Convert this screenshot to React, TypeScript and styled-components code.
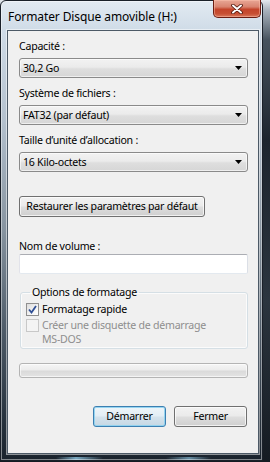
import React from "react";
import styled, { createGlobalStyle } from "styled-components";

const GlobalStyle = createGlobalStyle`
  html, body {
    margin: 0;
    padding: 0;
  }
  body {
    font-family: "Noto Sans", "Open Sans", sans-serif;
    font-size: 10.6px;
    letter-spacing: -0.25px;
    color: #000;
  }
`;

const Desktop = styled.div`
  display: flex;
  width: 270px;
  height: 462px;
  overflow: hidden;
  background: linear-gradient(
    to bottom,
    #e4e9ee 0px,
    #aab4be 10px,
    #46525e 40px,
    #1d252e 140px,
    #2b353f 300px,
    #151b22 100%
  );
`;

const Window = styled.div`
  box-sizing: border-box;
  width: 263px;
  height: 461px;
  display: flex;
  flex-direction: column;
  border: 1px solid #1a2029;
  border-radius: 6px 6px 0 0;
  box-shadow: inset 0 0 0 1px rgba(255, 255, 255, 0.45);
  background:
    linear-gradient(
        to right,
        transparent 55px,
        rgba(150, 210, 240, 0.75) 75px,
        transparent 102px,
        transparent 165px,
        rgba(150, 210, 240, 0.6) 188px,
        transparent 210px
      )
      bottom / 100% 3px no-repeat,
    linear-gradient(
      to bottom,
      #e2eaf2 0px,
      #cfdbe7 30px,
      #b3c0cd 120px,
      #86939f 230px,
      #4e5b68 330px,
      #27323d 420px,
      #1a232d 100%
    );
`;

const TitleBar = styled.div`
  height: 29px;
  display: flex;
  justify-content: space-between;
  padding-left: 7px;
`;

const Title = styled.div`
  align-self: center;
  font-size: 12px;
  letter-spacing: -0.1px;
  line-height: 15px;
  margin-top: 1px;
  color: #000;
`;

const CloseButton = styled.div`
  width: 48px;
  height: 18px;
  margin-right: 1px;
  margin-top: -1px;
  box-sizing: border-box;
  border: 1px solid #6b1d12;
  border-top: none;
  border-radius: 0 0 5px 5px;
  background: linear-gradient(
    to bottom,
    #e8a795 0%,
    #d98470 40%,
    #c4452b 55%,
    #c74f33 80%,
    #d9785c 100%
  );
  box-shadow: inset 0 0 0 1px rgba(255, 200, 180, 0.45);
  display: flex;
  align-items: center;
  justify-content: center;
`;

const Client = styled.div`
  flex: 1;
  margin: 0 3px 6px 6px;
  background: #f0f0f0;
  border: 1px solid #4c5966;
  box-shadow: 0 0 0 1px rgba(255, 255, 255, 0.5);
  display: flex;
  flex-direction: column;
  padding: 0 10px 0 11px;
`;

const Label = styled.div<{ $top: number }>`
  margin-top: ${p => p.$top}px;
  line-height: 15px;
  height: 15px;
  white-space: nowrap;
`;

const Combo = styled.div<{ $top: number }>`
  margin-top: ${p => p.$top}px;
  height: 20px;
  box-sizing: border-box;
  border: 1px solid #8a8a8a;
  border-radius: 3px;
  background: linear-gradient(to bottom, #f2f2f2 0%, #ebebeb 45%, #dedede 55%, #d6d6d6 100%);
  box-shadow: inset 0 0 0 1px rgba(255, 255, 255, 0.6);
  display: flex;
  align-items: center;
  justify-content: space-between;
  padding: 0 5px 0 3px;
  line-height: 15px;
`;

const Button = styled.div<{ $width: number; $primary?: boolean }>`
  width: ${p => p.$width}px;
  height: 21px;
  box-sizing: border-box;
  border: 1px solid ${p => (p.$primary ? "#3c7fb1" : "#707070")};
  border-radius: 3px;
  background: ${p =>
    p.$primary
      ? "linear-gradient(to bottom, #eef5f9 0%, #e3eef5 45%, #d3e2ec 55%, #c6d8e4 100%)"
      : "linear-gradient(to bottom, #f2f2f2 0%, #ebebeb 45%, #dddddd 55%, #cfcfcf 100%)"};
  box-shadow: inset 0 0 0 1px
    ${p => (p.$primary ? "rgba(140, 210, 240, 0.9)" : "rgba(255, 255, 255, 0.7)")};
  display: flex;
  align-items: center;
  justify-content: center;
  line-height: 15px;
  white-space: nowrap;
`;

const RestoreButton = styled(Button)`
  margin-top: 24px;
`;

const TextBox = styled.div`
  height: 20px;
  box-sizing: border-box;
  background: #fff;
  border: 1px solid;
  border-color: #abadb3 #dbdfe6 #e3e9ef #e2e3ea;
  border-radius: 2px;
`;

const Group = styled.fieldset`
  margin: 11px 0 0 1px;
  padding: 2px 0 2px 5px;
  border: 1px solid #d5dfe5;
  border-radius: 3px;
  box-shadow: inset 0 0 0 1px rgba(255, 255, 255, 0.7);
  min-width: 0;
`;

const Legend = styled.legend`
  padding: 0 2px;
  margin-left: 4px;
  line-height: 15px;
`;

const CheckRow = styled.div<{ $disabled?: boolean; $top: number }>`
  display: flex;
  align-items: flex-start;
  gap: 3px;
  margin-top: ${p => p.$top}px;
  color: ${p => (p.$disabled ? "#8e8e8e" : "#000")};
  line-height: 14px;
`;

const Box = styled.div<{ $disabled?: boolean }>`
  flex: none;
  width: 13px;
  height: 13px;
  margin-top: 1px;
  box-sizing: border-box;
  border: 1px solid ${p => (p.$disabled ? "#c8c8c8" : "#8f8f8f")};
  background: ${p =>
    p.$disabled
      ? "#f4f4f4"
      : "linear-gradient(135deg, #dcdcdc 0%, #f4f4f4 60%, #ffffff 100%)"};
  display: flex;
  align-items: center;
  justify-content: center;
`;

const Progress = styled.div`
  margin-top: 14px;
  height: 15px;
  box-sizing: border-box;
  border: 1px solid #b4b4b4;
  border-radius: 3px;
  background: linear-gradient(to bottom, #f6f6f6 0%, #ececec 45%, #dadada 55%, #e4e4e4 100%);
  box-shadow: inset 0 0 0 1px rgba(255, 255, 255, 0.6);
`;

const ButtonRow = styled.div`
  margin-top: 28px;
  display: flex;
  justify-content: flex-end;
  gap: 8px;
  padding-right: 1px;
`;

const Arrow = () => (
  <svg width="7" height="4" viewBox="0 0 7 4">
    <path d="M0 0 H7 L3.5 4 Z" fill="#000" />
  </svg>
);

const ComboBox = ({ value, top }: { value: string; top: number }) => (
  <Combo $top={top}>
    <span>{value}</span>
    <Arrow />
  </Combo>
);

const CloseGlyph = () => (
  <svg width="12" height="10" viewBox="0 0 12 10">
    <path d="M2 1.5 L10 8.5 M10 1.5 L2 8.5" stroke="#4a1208" strokeWidth="3.6" strokeLinecap="round" />
    <path d="M2 1.5 L10 8.5 M10 1.5 L2 8.5" stroke="#ffffff" strokeWidth="2" strokeLinecap="round" />
  </svg>
);

const Check = () => (
  <svg width="9" height="9" viewBox="0 0 9 9">
    <path d="M1 4.5 L3.5 7.5 L8 1" stroke="#2f4f95" strokeWidth="1.8" fill="none" />
  </svg>
);

const App = () => {
  return (
    <>
      <GlobalStyle />
      <Desktop>
        <Window>
          <TitleBar>
            <Title>Formater Disque amovible (H:)</Title>
            <CloseButton>
              <CloseGlyph />
            </CloseButton>
          </TitleBar>
          <Client>
            <Label $top={8}>Capacité :</Label>
            <ComboBox top={4} value="30,2 Go" />
            <Label $top={8}>Système de fichiers :</Label>
            <ComboBox top={4} value="FAT32 (par défaut)" />
            <Label $top={8}>Taille d’unité d’allocation :</Label>
            <ComboBox top={4} value="16 Kilo-octets" />
            <RestoreButton $width={186}>Restaurer les paramètres par défaut</RestoreButton>
            <Label $top={22}>Nom de volume :</Label>
            <TextBox />
            <Group>
              <Legend>Options de formatage</Legend>
              <CheckRow $top={0}>
                <Box>
                  <Check />
                </Box>
                <span>Formatage rapide</span>
              </CheckRow>
              <CheckRow $top={2} $disabled>
                <Box $disabled />
                <span>
                  Créer une disquette de démarrage
                  <br />
                  MS-DOS
                </span>
              </CheckRow>
            </Group>
            <Progress />
            <ButtonRow>
              <Button $width={73} $primary>
                Démarrer
              </Button>
              <Button $width={73}>Fermer</Button>
            </ButtonRow>
          </Client>
        </Window>
      </Desktop>
    </>
  );
};

export default App;
